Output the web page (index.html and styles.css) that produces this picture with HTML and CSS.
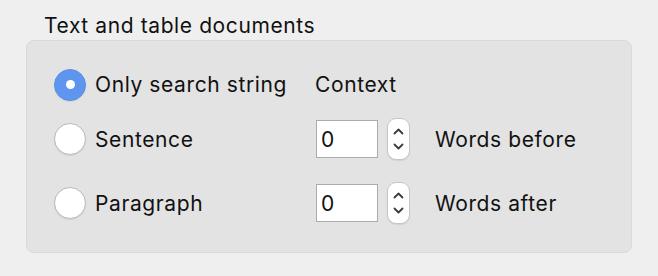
FILE: index.html
```html
<!DOCTYPE html>
<html lang="en">
<head>
    <meta charset="UTF-8" />
    <title>Search options</title>
    <link rel="stylesheet" href="styles.css">
</head>
<body>

<div class="page">
    <div class="title">Text and table documents</div>

    <div class="panel">
        <label class="option">
            <span class="radio on"></span>
            <span>Only search string</span>
        </label>
        <div class="heading">Context</div>

        <label class="option">
            <span class="radio"></span>
            <span>Sentence</span>
        </label>
        <div class="field">
            <input class="num" type="text" value="0">
            <span class="stepper">
                <svg width="23" height="42" viewBox="0 0 23 42">
                    <path d="M7.5 15.5 L11.5 11.5 L15.5 15.5" />
                    <path d="M7.5 26.5 L11.5 30.5 L15.5 26.5" />
                </svg>
            </span>
            <span class="unit">Words before</span>
        </div>

        <label class="option">
            <span class="radio"></span>
            <span>Paragraph</span>
        </label>
        <div class="field">
            <input class="num" type="text" value="0">
            <span class="stepper">
                <svg width="23" height="42" viewBox="0 0 23 42">
                    <path d="M7.5 15.5 L11.5 11.5 L15.5 15.5" />
                    <path d="M7.5 26.5 L11.5 30.5 L15.5 26.5" />
                </svg>
            </span>
            <span class="unit">Words after</span>
        </div>
    </div>
</div>

</body>
</html>
```

FILE: styles.css
```css
*{ box-sizing:border-box; }
body{ margin:0; background:#efefef; font-family:"Inter", "Liberation Sans", sans-serif; font-size:21px; letter-spacing:0.6px; color:#111; }

.page{ padding:14px 26px 0 26px; }
.title{ padding-left:18px; line-height:24px; margin-bottom:2px; }

.panel{
    width:606px; height:213px;
    background:#e3e3e3; border:1px solid #d9d9d9; border-radius:8px;
    padding:21px 0 0 27px;
    display:grid;
    grid-template-columns:261px auto;
    grid-template-rows:45px 64px 64px;
    align-items:center;
}

.option{ display:flex; align-items:center; gap:9px; }
.radio{
    width:32px; height:32px; border-radius:50%; flex:none;
    background:#fff; border:1px solid #b9b9b9;
    box-shadow:0 1px 1px rgba(0,0,0,0.08);
    display:flex; align-items:center; justify-content:center;
}
.radio.on{ background:#5e95ef; border-color:#5a90ea; }
.radio.on::after{ content:""; width:9px; height:9px; border-radius:50%; background:#fff; }

.field{ display:flex; align-items:center; }
.num{
    width:62px; height:38px; margin:0 0 0 1px;
    border:1px solid #ababab; background:#fff;
    font:inherit; color:#111; padding:0 4px;
    outline:none;
}
.stepper{
    width:23px; height:42px; margin-left:9px;
    background:#fff; border:1px solid #c6c6c6; border-radius:9px;
    box-shadow:0 1px 1px rgba(0,0,0,0.08);
    display:flex;
}
.stepper svg{ margin:-1px; }
.stepper path{ fill:none; stroke:#3c3c3c; stroke-width:1.8; stroke-linecap:round; stroke-linejoin:round; }
.unit{ margin-left:25px; }
```
